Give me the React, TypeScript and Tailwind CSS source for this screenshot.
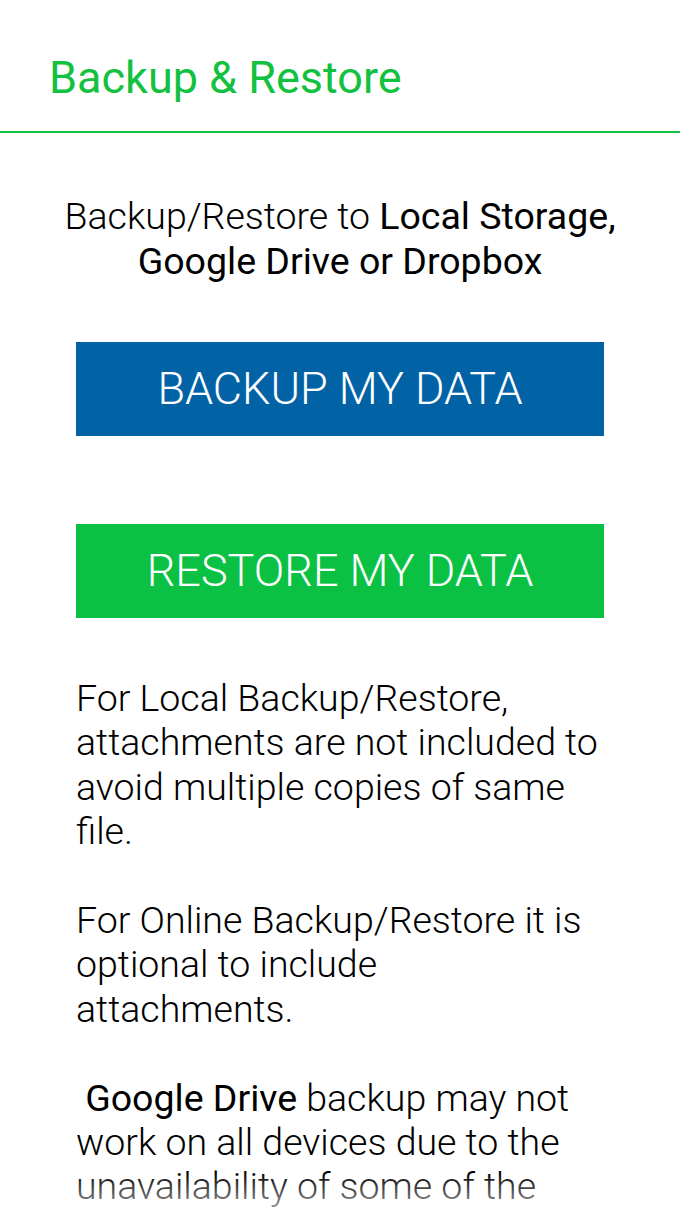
export default function App() {
  return (
    <div className="relative h-[1208px] w-[680px] overflow-hidden bg-white font-['Roboto',sans-serif]">
      <header className="border-b-2 border-[#12c13f] px-[49px] pb-[26px] pt-[51px]">
        <h1 className="text-[45px] leading-[54px] font-normal text-[#12c13f]">
          Backup &amp; Restore
        </h1>
      </header>

      <main className="px-[76px] pt-[61px]">
        <p className="-mx-[20px] text-center text-[37.5px] leading-[45px] font-light text-black">
          Backup/Restore to <span className="font-normal">Local Storage, Google Drive or Dropbox</span>
        </p>

        <button className="mt-[58px] flex h-[94px] w-full items-center justify-center bg-[#0262a6] text-[45px] font-light text-white">
          BACKUP MY DATA
        </button>
        <button className="mt-[88px] flex h-[94px] w-full items-center justify-center bg-[#0bc143] text-[45px] font-light text-white">
          RESTORE MY DATA
        </button>

        <div className="mt-[58px] w-[523px] space-y-[44.4px] text-[37.5px] leading-[44.4px] font-light text-black">
          <p>
            For Local Backup/Restore, attachments are not included to avoid multiple copies of same
            file.
          </p>
          <p>For Online Backup/Restore it is optional to include attachments.</p>
          <p>
            {"\u00a0"}
            <span className="font-normal">Google Drive</span> backup may not work on all devices due
            to the unavailability of some of the required services.
          </p>
        </div>
      </main>

      {/* scroll fading edge */}
      <div className="pointer-events-none absolute inset-x-0 bottom-0 h-[36px] bg-gradient-to-b from-white/0 to-white/60" />
    </div>
  );
}
